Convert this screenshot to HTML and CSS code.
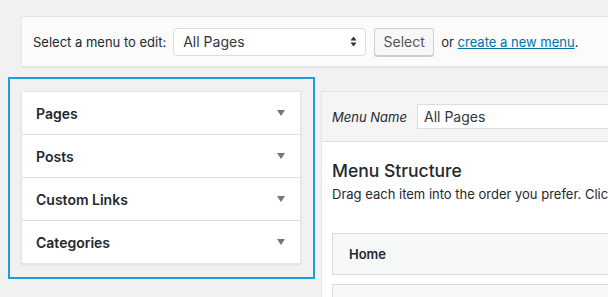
FILE: index.html
```html
<!DOCTYPE html>
<html lang="en">
<head>
    <meta charset="UTF-8">
    <title>Menus</title>
    <link rel="stylesheet" href="styles.css">
</head>
<body>

    <div class="manage-menus">
        <label class="menu-label">Select a menu to edit:</label>
        <div class="menu-select">
            <span>All Pages</span>
            <svg class="updown" width="7" height="11" viewBox="0 0 7 11">
                <path d="M0.5 4.5 L3.5 0.5 L6.5 4.5 Z M0.5 6.5 L3.5 10.5 L6.5 6.5 Z" fill="#333"/>
            </svg>
        </div>
        <span class="button">Select</span>
        <span class="or-text">or <a href="#">create a new menu</a>.</span>
    </div>

    <div class="columns">
        <div class="highlight">
            <div class="accordion">
                <div class="section">
                    <span>Pages</span>
                    <span class="arrow"></span>
                </div>
                <div class="section">
                    <span>Posts</span>
                    <span class="arrow"></span>
                </div>
                <div class="section">
                    <span>Custom Links</span>
                    <span class="arrow"></span>
                </div>
                <div class="section">
                    <span>Categories</span>
                    <span class="arrow"></span>
                </div>
            </div>
        </div>

        <div class="menu-edit">
            <div class="menu-header">
                <span class="menu-name-label">Menu Name</span>
                <div class="menu-name-input">All Pages</div>
            </div>
            <div class="menu-body">
                <h3>Menu Structure</h3>
                <p class="drag-text">Drag each item into the order you prefer. Click</p>
                <div class="menu-item">Home</div>
                <div class="menu-item"></div>
            </div>
        </div>
    </div>

</body>
</html>
```

FILE: styles.css
```css
body {
    margin: 0;
    background-color: #f1f1f1;
    font-family: Inter, "Noto Sans", sans-serif;
    font-size: 13px;
    color: #23282d;
    overflow: hidden;
    width: 608px;
    height: 297px;
}
.manage-menus {
    display: flex;
    align-items: center;
    margin: 16px 0 0 21px;
    height: 51px;
    padding-left: 11px;
    background-color: #fbfbfb;
    border: 1px solid #e5e5e5;
    border-right: none;
    box-shadow: 0 1px 1px rgba(0, 0, 0, 0.04);
    white-space: nowrap;
    box-sizing: border-box;
}
.menu-label {
    margin-right: 7px;
}
.menu-select {
    display: flex;
    align-items: center;
    justify-content: space-between;
    width: 193px;
    height: 28px;
    box-sizing: border-box;
    padding: 0 8px 0 9px;
    background-color: #fff;
    border: 1px solid #ddd;
    border-radius: 4px;
    font-size: 14px;
    color: #32373c;
}
.updown {
    display: block;
}
.button {
    display: inline-flex;
    align-items: center;
    justify-content: center;
    margin-left: 8px;
    width: 60px;
    height: 28px;
    box-sizing: border-box;
    background-color: #f7f7f7;
    border: 1px solid #ccc;
    border-radius: 3px;
    box-shadow: 0 1px 0 #ccc;
    color: #555;
    font-size: 14px;
}
.or-text {
    margin-left: 7px;
    font-size: 13px;
}
.or-text a {
    color: #0073aa;
}
.columns {
    display: flex;
    align-items: flex-start;
    margin: 10px 0 0 8px;
    gap: 6px;
}
.highlight {
    flex: none;
    width: 307px;
    height: 202px;
    box-sizing: border-box;
    border: 2px solid #1ea0d6;
    padding: 12px 12px 0 11px;
}
.accordion {
    background-color: #fff;
    border: 1px solid #e5e5e5;
    box-shadow: 0 1px 2px rgba(0, 0, 0, 0.08);
}
.section {
    display: flex;
    align-items: center;
    justify-content: space-between;
    height: 42px;
    padding: 0 15px 0 14px;
    border-top: 1px solid #e1e1e1;
    font-size: 14px;
    font-weight: 600;
}
.section:first-child {
    border-top: none;
}
.arrow {
    width: 0;
    height: 0;
    border-left: 4px solid transparent;
    border-right: 4px solid transparent;
    border-top: 6px solid #72777c;
}
.menu-edit {
    flex: 1;
    min-width: 0;
    margin-top: 14px;
    background-color: #fff;
    border: 1px solid #e5e5e5;
    border-right: none;
    box-shadow: 0 1px 1px rgba(0, 0, 0, 0.04);
    height: 300px;
    overflow: hidden;
}
.menu-header {
    display: flex;
    align-items: center;
    height: 49px;
    padding-left: 10px;
    background-color: #f5f5f5;
    border-bottom: 1px solid #dfdfdf;
    white-space: nowrap;
}
.menu-name-label {
    flex: none;
    font-style: italic;
    width: 85px;
}
.menu-name-input {
    flex: none;
    width: 300px;
    height: 25px;
    line-height: 23px;
    box-sizing: border-box;
    padding-left: 6px;
    background-color: #fff;
    border: 1px solid #ddd;
    font-size: 14px;
    color: #32373c;
}
.menu-body {
    padding: 0 0 0 10px;
    white-space: nowrap;
}
.menu-body h3 {
    margin: 17px 0 0;
    font-size: 17.5px;
    font-weight: 500;
    line-height: 24px;
}
.drag-text {
    margin: 2px 0 0;
    line-height: 18px;
}
.menu-item {
    margin-top: 30px;
    height: 42px;
    line-height: 40px;
    box-sizing: border-box;
    padding-left: 16px;
    background-color: #f6f7f7;
    border: 1px solid #dcdcdc;
    border-right: none;
    font-weight: 600;
}
.menu-item + .menu-item {
    margin-top: 9px;
}
```
